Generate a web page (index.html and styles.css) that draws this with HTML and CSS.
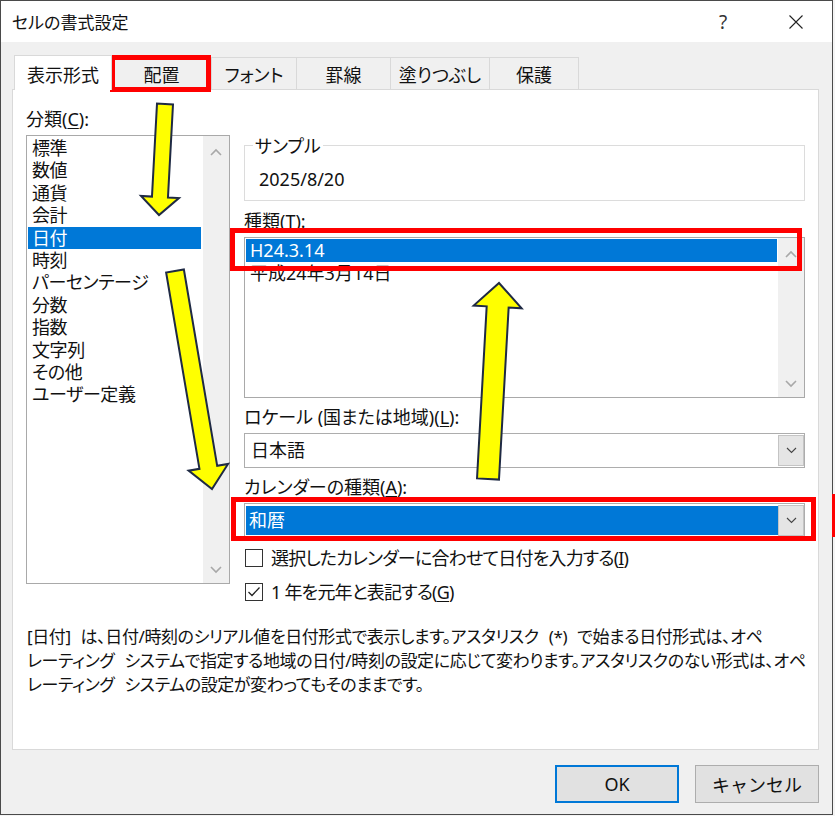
FILE: index.html
```html
<!DOCTYPE html>
<html lang="ja">
<head>
    <meta charset="UTF-8">
    <meta name="viewport" content="width=device-width, initial-scale=1.0">
    <title>セルの書式設定</title>
    <link rel="stylesheet" href="styles.css">
</head>
<body>
<div class="page">
    <div class="dialog">
        <div class="titlebar">
            <span class="title">セルの書式設定</span>
            <span class="help">?</span>
            <span class="close">
                <svg width="16" height="16" viewBox="0 0 16 16"><path d="M1.5 1.5 L14.5 14.5 M14.5 1.5 L1.5 14.5" stroke="#222" stroke-width="1.1" fill="none"/></svg>
            </span>
        </div>

        <div class="content">
            <div class="tabs">
                <div class="tab tab-active">表示形式</div>
                <div class="tab">配置</div>
                <div class="tab">フォント</div>
                <div class="tab">罫線</div>
                <div class="tab">塗りつぶし</div>
                <div class="tab">保護</div>
            </div>

            <div class="panel">
                <div class="columns">
                    <div class="category">
                        <div class="label">分類(<u>C</u>):</div>
                        <div class="listbox category-list">
                            <ul class="items">
                                <li>標準</li>
                                <li>数値</li>
                                <li>通貨</li>
                                <li>会計</li>
                                <li class="selected">日付</li>
                                <li>時刻</li>
                                <li>パーセンテージ</li>
                                <li>分数</li>
                                <li>指数</li>
                                <li>文字列</li>
                                <li>その他</li>
                                <li>ユーザー定義</li>
                            </ul>
                            <div class="scrollbar">
                                <svg width="12" height="8" viewBox="0 0 12 8"><polyline points="1,7 6,2 11,7" stroke="#a8a8a8" stroke-width="1.6" fill="none"/></svg>
                                <svg width="12" height="8" viewBox="0 0 12 8"><polyline points="1,1 6,6 11,1" stroke="#a8a8a8" stroke-width="1.6" fill="none"/></svg>
                            </div>
                        </div>
                    </div>

                    <div class="settings">
                        <div class="sample">
                            <span class="sample-legend">サンプル</span>
                            <div class="sample-value">2025/8/20</div>
                        </div>

                        <div class="label label-type">種類(<u>T</u>):</div>
                        <div class="listbox type-list">
                            <ul class="items">
                                <li class="selected">H24.3.14</li>
                                <li>平成24年3月14日</li>
                            </ul>
                            <div class="scrollbar">
                                <svg width="12" height="8" viewBox="0 0 12 8"><polyline points="1,7 6,2 11,7" stroke="#a8a8a8" stroke-width="1.6" fill="none"/></svg>
                                <svg width="12" height="8" viewBox="0 0 12 8"><polyline points="1,1 6,6 11,1" stroke="#a8a8a8" stroke-width="1.6" fill="none"/></svg>
                            </div>
                        </div>

                        <div class="label label-gap">ロケール (国または地域)(<u>L</u>):</div>
                        <div class="dropdown">
                            <span class="dropdown-value">日本語</span>
                            <span class="dropdown-button">
                                <svg width="11" height="7" viewBox="0 0 11 7"><polyline points="1,1 5.5,5.5 10,1" stroke="#444" stroke-width="1.1" fill="none"/></svg>
                            </span>
                        </div>

                        <div class="label label-gap">カレンダーの種類(<u>A</u>):</div>
                        <div class="dropdown">
                            <span class="dropdown-value dropdown-selected">和暦</span>
                            <span class="dropdown-button">
                                <svg width="11" height="7" viewBox="0 0 11 7"><polyline points="1,1 5.5,5.5 10,1" stroke="#444" stroke-width="1.1" fill="none"/></svg>
                            </span>
                        </div>

                        <label class="check check-first">
                            <span class="box"></span>
                            <span class="check-text">選択したカレンダーに合わせて日付を入力する(<u>I</u>)</span>
                        </label>
                        <label class="check">
                            <span class="box">
                                <svg width="16" height="16" viewBox="0 0 16 16"><polyline points="2.5,8 6,11.5 13.5,3.5" stroke="#222" stroke-width="1.3" fill="none"/></svg>
                            </span>
                            <span class="check-text">1 年を元年と表記する(<u>G</u>)</span>
                        </label>
                    </div>
                </div>

                <p class="description">[日付] は、日付/時刻のシリアル値を日付形式で表示します。アスタリスク (*) で始まる日付形式は、オペ<br>レーティング システムで指定する地域の日付/時刻の設定に応じて変わります。アスタリスクのない形式は、オペ<br>レーティング システムの設定が変わってもそのままです。</p>
            </div>

            <div class="buttons">
                <button class="btn btn-default">OK</button>
                <button class="btn">キャンセル</button>
            </div>
        </div>
    </div>

    <!-- callouts drawn on top of the dialog -->
    <div class="marks">
        <div class="frame frame-tab"></div>
        <div class="frame frame-type"></div>
        <div class="frame frame-calendar"></div>
        <div class="frame-edge"></div>
        <svg class="arrows" width="835" height="816" viewBox="0 0 835 816">
            <polygon points="172.99,104.43 167.96,197.46 178.94,198.06 159,215 141,196 151.98,196.6 157.01,103.57"/>
            <polygon points="183.87,269.49 217.19,465.8 228.04,463.96 212,489 188.6,470.66 199.45,468.82 166.13,272.51"/>
            <polygon points="498.98,479.62 508.64,307.58 521.62,308.3 499,283 473.7,305.62 486.68,306.34 477.02,478.38"/>
        </svg>
    </div>
</div>
</body>
</html>
```

FILE: styles.css
```css
* {
    box-sizing: border-box;
}
body {
    margin: 0;
    background: #f4f4f4;
    font-family: "Noto Sans", "Noto Sans CJK JP", sans-serif;
    font-feature-settings: "palt";
    font-size: 18px;
    color: #111;
}
.page {
    position: relative;
    width: 835px;
    height: 816px;
}
.dialog {
    width: 833px;
    height: 815px;
    border: 1px solid #4a4a4a;
    background: #f0f0f0;
}

/* title bar */
.titlebar {
    height: 41px;
    background: #fff;
    display: flex;
    align-items: center;
    padding-left: 11px;
}
.title {
    flex: 1;
    font-size: 17px;
}
.help {
    width: 30px;
    text-align: center;
    font-size: 19px;
    color: #333;
    margin-right: 43px;
}
.close {
    width: 30px;
    display: flex;
    justify-content: center;
    margin-right: 21px;
}

.content {
    padding: 13px 13px 0 11px;
}

/* tabs */
.tabs {
    display: flex;
    align-items: flex-end;
    height: 34px;
    padding-left: 2px;
}
.tab {
    height: 32px;
    margin-left: -1px;
    border: 1px solid #d9d9d9;
    border-bottom: none;
    background: #f0f0f0;
    text-align: center;
    line-height: 34px;
}
.tab-active {
    position: relative;
    z-index: 1;
    height: 35px;
    margin-bottom: -1px;
    margin-left: 0;
    background: #fff;
    line-height: 39px;
}
.tab:nth-child(1) { width: 98px; }
.tab:nth-child(2) { width: 101px; }
.tab:nth-child(3) { width: 86px; }
.tab:nth-child(4) { width: 95px; }
.tab:nth-child(5) { width: 100px; }
.tab:nth-child(6) { width: 90px; }

/* main panel */
.panel {
    height: 661px;
    border: 1px solid #d9d9d9;
    background: #fff;
    padding: 18px 13px 0 13px;
}
.columns {
    display: flex;
    gap: 14px;
}
.category {
    width: 204px;
}
.settings {
    flex: 1;
}
.label {
    line-height: 22px;
    white-space: nowrap;
}
u {
    text-underline-offset: 2px;
}

/* list boxes */
.listbox {
    display: flex;
    border: 1px solid #a9a9a9;
    background: #fff;
    margin-top: 5px;
}
.category-list {
    height: 449px;
}
.type-list {
    height: 161px;
}
.items {
    flex: 1;
    list-style: none;
    margin: 0;
    padding: 1px;
}
.category-list li {
    line-height: 22.4px;
    padding-left: 4px;
    margin-right: 1px;
    letter-spacing: -0.4px;
}
.type-list li {
    line-height: 23px;
    padding-left: 4px;
}
.items .selected {
    background: #0078d7;
    color: #fff;
}
.scrollbar {
    width: 26px;
    background: #f0f0f0;
    display: flex;
    flex-direction: column;
    justify-content: space-between;
    align-items: center;
    padding: 12px 0 9px;
}

/* sample group */
.sample {
    margin-top: 37px;
    height: 56px;
    border: 1px solid #dcdcdc;
}
.sample-legend {
    display: block;
    width: fit-content;
    margin: -11px 0 0 8px;
    padding: 0 2px;
    background: #fff;
    line-height: 22px;
}
.sample-value {
    margin-top: 11px;
    padding-left: 14px;
    line-height: 22px;
}
.label-type {
    margin-top: 9px;
}
.label-gap {
    margin-top: 8px;
}

/* drop-down fields */
.dropdown {
    display: flex;
    height: 35px;
    margin-top: 5px;
    border: 1px solid #adadad;
    background: #fff;
    padding: 1px 0 1px 1px;
}
.dropdown-value {
    flex: 1;
    line-height: 31px;
    padding-left: 5px;
}
.dropdown-selected {
    background: #0078d7;
    color: #fff;
    margin: 1px 0;
    line-height: 29px;
    padding-left: 3px;
}
.dropdown-button {
    width: 26px;
    background: #e5e5e5;
    border: 1px solid #c4c4c4;
    display: flex;
    align-items: center;
    justify-content: center;
}

/* check boxes */
.check {
    display: flex;
    align-items: center;
    gap: 8px;
    line-height: 22px;
    margin-top: 12px;
    padding-left: 1px;
    white-space: nowrap;
}
.check-first {
    margin-top: 9px;
}
.check-text {
    letter-spacing: -0.8px;
}
.box {
    width: 18px;
    height: 18px;
    border: 1px solid #333;
    background: #fff;
    display: flex;
    align-items: center;
    justify-content: center;
}

.description {
    margin: 22px 0 0 1px;
    font-size: 17px;
    line-height: 24px;
    letter-spacing: -0.4px;
    word-spacing: 6px;
    white-space: nowrap;
}

/* dialog buttons */
.buttons {
    display: flex;
    justify-content: flex-end;
    gap: 16px;
    margin-top: 15px;
}
.btn {
    width: 124px;
    height: 38px;
    border: 1px solid #adadad;
    background: #e1e1e1;
    font-family: inherit;
    font-size: 18px;
    color: #111;
    padding: 0;
}
.btn-default {
    border: 2px solid #0078d7;
}

/* red frames and yellow arrows on top */
.marks {
    position: absolute;
    left: 0;
    top: 0;
    width: 835px;
    height: 816px;
    pointer-events: none;
}
.frame {
    position: absolute;
    border: 5px solid #ff0000;
}
.frame-tab {
    left: 110px;
    top: 55px;
    width: 101px;
    height: 37px;
}
.frame-type {
    left: 230px;
    top: 228px;
    width: 572px;
    height: 43px;
}
.frame-calendar {
    left: 231px;
    top: 497px;
    width: 585px;
    height: 44px;
}
.frame-edge {
    position: absolute;
    left: 832px;
    top: 494px;
    width: 3px;
    height: 43px;
    background: #ff0000;
}
.arrows {
    position: absolute;
    left: 0;
    top: 0;
}
.arrows polygon {
    fill: #ffff00;
    stroke: #1f2a44;
    stroke-width: 2;
    stroke-linejoin: miter;
}
```
